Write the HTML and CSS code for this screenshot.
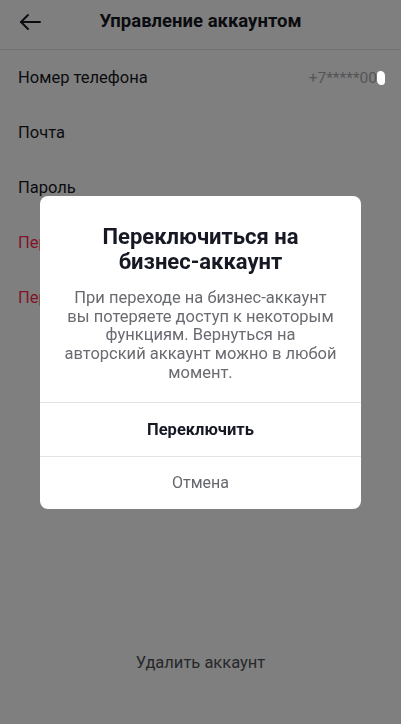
FILE: index.html
```html
<!DOCTYPE html>
<html lang="ru">
<head>
    <meta charset="UTF-8">
    <meta name="viewport" content="width=device-width, initial-scale=1.0">
    <title>Управление аккаунтом</title>
    <link rel="stylesheet" href="styles.css">
</head>
<body>
    <div class="screen">
        <div class="header">
            <span class="back">
                <svg width="24" height="24" viewBox="0 0 24 24" fill="none" stroke="#161823" stroke-width="1.9" stroke-linecap="round" stroke-linejoin="round">
                    <path d="M22 12H3"/>
                    <path d="M10 5L3 12l7 7"/>
                </svg>
            </span>
            <div class="title">Управление аккаунтом</div>
        </div>
        <div class="list">
            <div class="row">
                <span>Номер телефона</span>
                <span class="value">+7*****00<i class="blot"></i></span>
            </div>
            <div class="row">Почта</div>
            <div class="row">Пароль</div>
            <div class="row red">Переключиться на бизнес-аккаунт</div>
            <div class="row red">Перейти на личный аккаунт</div>
        </div>
        <div class="delete">Удалить аккаунт</div>
    </div>

    <div class="overlay">
        <div class="dialog">
            <div class="dialog-body">
                <h2>Переключиться на<br>бизнес-аккаунт</h2>
                <p>При переходе на бизнес-аккаунт<br>вы потеряете доступ к некоторым<br>функциям. Вернуться на<br>авторский аккаунт можно в любой<br>момент.</p>
            </div>
            <div class="btn primary">Переключить</div>
            <div class="btn">Отмена</div>
        </div>
    </div>
</body>
</html>
```

FILE: styles.css
```css
* {
    margin: 0;
    padding: 0;
    box-sizing: border-box;
}
body {
    font-family: Roboto, "Noto Sans", sans-serif;
    color: #161823;
    background: #fff;
}
.screen {
    height: 724px;
    display: flex;
    flex-direction: column;
}
.header {
    height: 50px;
    border-bottom: 1px solid rgba(22, 24, 35, .12);
    display: flex;
    align-items: center;
    justify-content: center;
    position: relative;
}
.back {
    position: absolute;
    left: 18px;
    top: 10px;
    width: 24px;
    height: 24px;
}
.title {
    font-size: 18.5px;
    font-weight: 700;
    margin-top: -7px;
}
.row {
    height: 55px;
    display: flex;
    align-items: center;
    justify-content: space-between;
    padding: 0 18px;
    font-size: 16.5px;
    white-space: nowrap;
    overflow: hidden;
}
.row.red {
    color: #fe2c55;
}
.value {
    color: #a9aaae;
    font-size: 15.5px;
    display: flex;
    align-items: center;
    margin-right: -2px;
}
/* white blot sits on top of the dim layer */
.blot {
    position: relative;
    z-index: 2;
    display: inline-block;
    width: 8px;
    height: 14px;
    background: #fff;
    border-radius: 4px 5px 4px 5px;
}
.delete {
    margin-top: auto;
    margin-bottom: 52px;
    text-align: center;
    font-size: 16.5px;
    color: #505158;
}
.overlay {
    position: fixed;
    z-index: 1;
    inset: 0;
    background: rgba(0, 0, 0, .5);
    display: flex;
    justify-content: center;
    align-items: flex-start;
    padding-top: 196px;
}
.dialog {
    width: 321px;
    background: #fff;
    border-radius: 8px;
    overflow: hidden;
}
.dialog-body {
    padding: 28px 12px 19px;
    text-align: center;
    white-space: nowrap;
}
.dialog h2 {
    font-size: 22px;
    line-height: 25px;
    font-weight: 700;
}
.dialog p {
    margin-top: 15px;
    font-size: 16.5px;
    line-height: 18.7px;
    color: #6a6b71;
}
.btn {
    height: 54px;
    border-top: 1px solid rgba(22, 24, 35, .12);
    display: flex;
    align-items: center;
    justify-content: center;
    font-size: 16px;
    color: #66676d;
}
.btn:last-child {
    height: 53px;
}
.btn.primary {
    font-weight: 700;
    font-size: 16.5px;
    color: #161823;
}
```
